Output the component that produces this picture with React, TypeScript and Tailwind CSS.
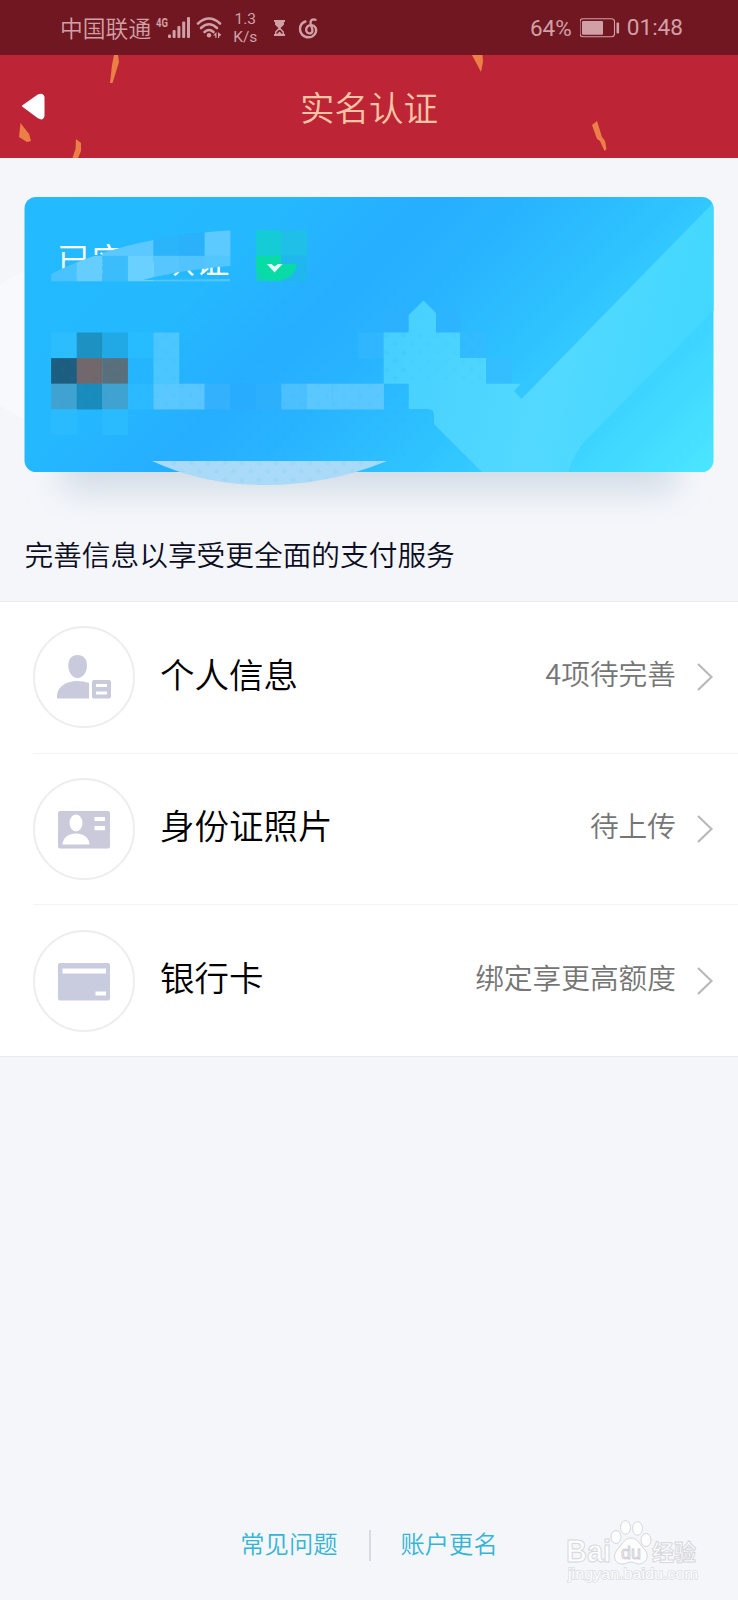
import React from 'react';

interface Row {
    label: string;
    hint: string;
    icon: React.ReactNode;
}

// [column, row, color]
type Cell = [number, number, string];

const CELL = 25.58;

const titleCells: Cell[] = [
    [4, 9, '#5bc8ff'],
    [5, 9, '#5bc8ff'],
    [6, 9, '#2cb4fb'],
    [7, 9, '#2ab1fa'],
    [8, 9, '#5cc9ff'],
    [2, 10, '#49c3ff'],
    [3, 10, '#66cdff'],
    [4, 10, '#3bbcfb'],
    [5, 10, '#69d0ff'],
    [6, 10, '#57c6ff'],
    [7, 10, '#51c3fd'],
    [8, 10, '#52c6ff'],
    [10, 9, '#15cbd5'],
    [11, 9, '#1fbfe8'],
    [10, 10, '#12d0bd'],
    [11, 10, '#20b7ef'],
];

const bodyCells: Cell[] = [
    [2, 13, '#2cbdff'],
    [3, 13, '#1d91c2'],
    [4, 13, '#21a9e6'],
    [5, 13, '#27bcff'],
    [6, 13, '#4cc6ff'],
    [2, 14, '#1c5d80'],
    [3, 14, '#72686b'],
    [4, 14, '#596f7c'],
    [5, 14, '#25b5fe'],
    [6, 14, '#4cc6ff'],
    [2, 15, '#3fa2d1'],
    [3, 15, '#198cbd'],
    [4, 15, '#3fa2d1'],
    [5, 15, '#2bb9ff'],
    [6, 15, '#5ac8ff'],
    [7, 15, '#59c6ff'],
    [8, 15, '#34b1fd'],
    [9, 15, '#28adfe'],
    [10, 15, '#2cb0fc'],
    [11, 15, '#4cc0ff'],
    [12, 15, '#5ac8ff'],
    [13, 15, '#5ac8ff'],
    [14, 15, '#5ac8ff'],
    [2, 16, '#2abbff'],
    [4, 16, '#2abbff'],
    [14, 13, '#30b6ff'],
    [15, 12, '#2bb1ff'],
    [17, 12, '#2db4ff'],
    [18, 13, '#33bbff'],
    [19, 14, '#34beff'],
];

const Mosaic = ({ cells }: { cells: Cell[] }) => (
    <>
        {cells.map(([col, row, color]) => (
            <rect
                key={`${col}-${row}`}
                x={col * CELL}
                y={row * CELL}
                width={CELL + 0.2}
                height={CELL + 0.2}
                fill={color}
            />
        ))}
    </>
);

const StatusBar = () => (
    <div className="h-[55px] bg-[#711721] text-[#d0a0a6] flex items-center pt-px pl-[60px] pr-[55px]">
        <span className="text-[22.8px] leading-none whitespace-nowrap font-[350]">中国联通</span>
        <svg className="ml-1 -mt-px shrink-0" width="68" height="26" viewBox="155 15 68 26" fill="currentColor">
            <text x="156" y="27" fontSize="13" fontWeight="bold" textLength="12" lengthAdjust="spacingAndGlyphs" fontFamily="Roboto, sans-serif">4G</text>
            <rect x="168" y="34.5" width="3" height="3.5" rx="1" />
            <rect x="172.6" y="30" width="3" height="8" rx="1" />
            <rect x="177.4" y="26" width="3" height="12" rx="1" />
            <rect x="182.2" y="21.5" width="3" height="16.5" rx="1" />
            <rect x="187" y="17" width="3" height="21" rx="1" />
            <g fill="none" stroke="currentColor" strokeWidth="2.6" strokeLinecap="round">
                <path d="M198 23.5Q209 13.5 220 23.5" />
                <path d="M201 28Q209 20.5 217 28" />
                <path d="M204.5 32Q209 28 213.5 32" />
            </g>
            <circle cx="209" cy="35.3" r="2.2" />
            <path d="M213 35.5L216.5 32V38H215.3V35.5ZM221.5 35L218 32V38H219.2V36.3Z" />
        </svg>
        <div className="ml-[10px] w-[24px] text-center font-[Roboto] text-[15.5px] leading-[18px]">
            <div>1.3</div>
            <div>K/s</div>
        </div>
        <svg className="ml-[16px] -mt-px shrink-0" width="46" height="24" viewBox="273 16 46 24" fill="none" stroke="currentColor">
            <path d="M274 21H285M274 35H285" strokeWidth="2" />
            <path d="M275.8 22V24.5L279.5 28L275.8 32V35M283.2 22V24.5L279.5 28L283.2 32V35" strokeWidth="1.5" />
            <path d="M276 22H283V24.5L279.5 28.5L276 24.5ZM276 35L279.5 31.5L283 35Z" fill="currentColor" stroke="none" />
            <path
                d="M315.5 19.8C312.5 18.6 310 20.5 310.6 23.3L312.4 29.8C312.9 32.6 310.8 33.7 309 33.3C306.3 32.7 305.5 30 306.6 27.7C308.5 24.2 313.7 24.2 315.6 27.8C317.5 32 314 37.3 308.6 37.3C303 37.3 299.7 33 300 28.7C300.2 25.3 302.2 22.6 305.4 21.5"
                strokeWidth="2.4"
                strokeLinecap="round"
            />
        </svg>
        <span className="ml-auto font-[Roboto] text-[22.5px] leading-none pt-px">64%</span>
        <svg className="ml-[8px] shrink-0" width="41" height="20" viewBox="579 18 41 20">
            <rect x="579" y="18.8" width="34.5" height="18" rx="3" fill="none" stroke="currentColor" strokeWidth="1.1" />
            <rect x="581" y="21" width="21" height="13.7" rx="1" fill="currentColor" />
            <rect x="615.5" y="22.5" width="2.6" height="11" rx="1" fill="currentColor" />
        </svg>
        <span className="ml-[6px] font-[Roboto] text-[22.6px] leading-none pt-px">01:48</span>
    </div>
);

const Header = () => (
    <header className="relative h-[103px] bg-[#bd2536] flex items-center justify-center">
        <svg className="absolute inset-0" width="738" height="103" viewBox="0 55 738 103">
            <g fill="#ec7f48">
                <path d="M114 55H118L119 62L112.5 83H110L112 65Z" />
                <path d="M20.5 123L29 134L31 141L27 142L19 137Z" />
                <path d="M76 139L81 143V151L78 158H72.5L75.5 149Z" />
                <path d="M472 55H482.5L483 62L481 72Z" />
                <path d="M597 121L592 125L597 139L600 141L604.5 151L606.5 149L605 141L602 137Z" />
            </g>
            <path
                d="M23 106L38 95.5Q43 93.5 43.5 97V116Q43 120 38.5 117.5Z"
                fill="#fff"
                stroke="#fff"
                strokeWidth="2"
                strokeLinejoin="round"
            />
        </svg>
        <h1 className="relative text-[34.5px] leading-none font-[350] text-[#fbc4a4]">实名认证</h1>
    </header>
);

const IdentityCard = () => (
    <section className="relative h-[342px]">
        <svg className="absolute inset-0" width="738" height="364" viewBox="0 158 738 364">
            <defs>
                <linearGradient id="cardFill" gradientUnits="userSpaceOnUse" x1="24" y1="197" x2="506" y2="679">
                    <stop offset="0" stopColor="#24baff" />
                    <stop offset="0.27" stopColor="#24b9ff" />
                    <stop offset="0.42" stopColor="#26aeff" />
                    <stop offset="0.52" stopColor="#28b3ff" />
                    <stop offset="0.68" stopColor="#2ec3ff" />
                    <stop offset="1" stopColor="#4be6ff" />
                </linearGradient>
                <linearGradient id="tickFill" gradientUnits="userSpaceOnUse" x1="400" y1="330" x2="700" y2="400">
                    <stop offset="0" stopColor="#47d0ff" />
                    <stop offset="0.5" stopColor="#53d9ff" />
                    <stop offset="1" stopColor="#40d7ff" />
                </linearGradient>
                <filter id="soft" x="-20%" y="-80%" width="140%" height="260%">
                    <feGaussianBlur stdDeviation="16" />
                </filter>
                <clipPath id="cardClip">
                    <rect x="24.5" y="197" width="689" height="275" rx="11.5" />
                </clipPath>
            </defs>
            <circle cx="50" cy="345" r="78" fill="#f8f9fd" />
            <rect x="62" y="430" width="614" height="62" fill="#d3dde7" filter="url(#soft)" />
            <g clipPath="url(#cardClip)">
                <rect x="24" y="197" width="690" height="276" fill="url(#cardFill)" />
                <Mosaic cells={bodyCells} />
                <path
                    d="M408.7 315L423.5 300.5L436 313V332.5H460V358H486V383.7H521L514 391L521.5 399L714 202V310L645 380L585 441Q574 453 568 473H483L434 424V415Q434 409 428 409H408.7V383.7H383.7V332.5H408.7Z"
                    fill="url(#tickFill)"
                />
            </g>
        </svg>
        <div className="relative pt-[83px] pl-[57px] flex items-center">
            <span className="text-[34.5px] leading-none text-white font-[350]">已实名认证</span>
        </div>
        <svg className="absolute inset-0" width="738" height="342" viewBox="0 158 738 342">
            <defs>
                <clipPath id="titleClip">
                    <path d="M51 281.5V274Q125 237 230 230.3L256 229H307V281.5H256V264L230 266Q180 270 143 280L230 279V281.5Z" />
                </clipPath>
                <pattern id="dots" width="17" height="17" patternUnits="userSpaceOnUse">
                    <path d="M4 1L7 4L4 7L1 4ZM12.5 9.5L15.5 12.5L12.5 15.5L9.5 12.5Z" fill="#0b9bf0" fillOpacity="0.05" />
                </pattern>
            </defs>
            <g clipPath="url(#titleClip)">
                <rect x="153" y="230" width="77" height="26" fill="#2ab3fb" />
                <Mosaic cells={titleCells} />
            </g>
            <path d="M256 256H281V264H297Q294 280.5 275 280.5Q260 280.5 256 268Z" fill="#08dba5" />
            <path d="M267 264H271.5L274.5 266.5L278 264H282.5L274.5 272.5Z" fill="#e4fff8" />
            <path d="M152 461H387Q328 485 265 485Q204 485 152 461Z" fill="#a9daf7" />
            <path d="M179 281.4H409V461H179Z" fill="url(#dots)" />
            <path d="M152 461H387Q328 485 265 485Q204 485 152 461Z" fill="url(#dots)" />
            <path d="M51 332.5H179V409H51ZM384 332.5H486V383.7H384Z" fill="url(#dots)" />
        </svg>
    </section>
);

const PersonIcon = () => (
    <svg width="54" height="44" viewBox="57 654 54 44" fill="#c9cadb">
        <path d="M77.5 654C83 654 87 658 87 664.5C87 671 83 677 77.5 677C72 677 68.3 671 68.3 664.5C68.3 658 72 654 77.5 654Z" />
        <path d="M57 697V694C58 685 67 680 77 680Q84 680 89 682V697.5H58Z" />
        <path fillRule="evenodd" d="M94 679H109Q111 679 111 681V695.5Q111 697.5 109 697.5H94Q92 697.5 92 695.5V681Q92 679 94 679ZM96 683V686H107V683ZM96 690.5V693.5H107V690.5Z" />
    </svg>
);

const IdIcon = () => (
    <svg className="mt-[3px]" width="52" height="38" viewBox="0 0 52 38">
        <rect width="52" height="37.5" rx="2" fill="#cacadb" />
        <ellipse cx="18" cy="12" rx="6.5" ry="8.5" fill="#fff" />
        <path d="M4.5 33.5C5 26 11 22.5 18 22.5S31 26 31.5 33.5Z" fill="#fff" />
        <path d="M36.5 6H47V10H36.5ZM36.5 15H47V19.3H36.5Z" fill="#fff" />
    </svg>
);

const BankIcon = () => (
    <svg className="mt-[3px]" width="52" height="38" viewBox="0 0 52 38">
        <rect width="52" height="37.5" rx="2" fill="#c9ccde" />
        <path d="M4.5 5.5H48V10.5H4.5ZM37.5 28.5H48V32.5H37.5Z" fill="#fff" />
    </svg>
);

const rows: Row[] = [
    { label: '个人信息', hint: '4项待完善', icon: <PersonIcon /> },
    { label: '身份证照片', hint: '待上传', icon: <IdIcon /> },
    { label: '银行卡', hint: '绑定享更高额度', icon: <BankIcon /> },
];

const InfoRow = ({ row }: { row: Row }) => (
    <li className="ml-[33px] h-[151.5px] pr-[24px] flex items-center border-b border-[#f3f3f5] last:h-[151px] last:border-b-0">
        <div className="size-[102px] rounded-full border-2 border-[#ededf0] flex items-center justify-center">
            {row.icon}
        </div>
        <span className="ml-[25px] -mt-[9px] text-[34.5px] leading-none font-[350] text-black">{row.label}</span>
        <span className="ml-auto -mt-[7px] text-[28.7px] leading-none font-[350] text-[#757575]">{row.hint}</span>
        <svg className="ml-[20px]" width="18" height="30" viewBox="0 0 18 30" fill="none" stroke="#b9b9b9" strokeWidth="2.2">
            <path d="M2 2L15.5 15L2 28" />
        </svg>
    </li>
);

const Watermark = () => (
    <svg className="absolute right-[38px] bottom-[10px] overflow-visible" width="140" height="75" viewBox="560 1515 140 75">
        <g fill="#fdfdfe" stroke="#d6d7dc" strokeWidth="1">
            <text x="566" y="1562" fontSize="31" fontWeight="bold" textLength="45" lengthAdjust="spacingAndGlyphs" fontFamily="Liberation Sans, sans-serif">Bai</text>
            <text x="652" y="1560" fontSize="22" fontWeight="bold" textLength="44" fontFamily="Noto Sans CJK SC, sans-serif">经验</text>
            <path d="M631 1538C638 1538 640 1545 645 1550C650 1556 646 1564 639 1564C635 1564 634 1562 631 1562S626 1564 622 1564C615 1564 612 1556 617 1550C622 1545 624 1538 631 1538Z" />
            <ellipse cx="616" cy="1537" rx="5" ry="6.5" />
            <ellipse cx="625.5" cy="1527.5" rx="5" ry="6.8" />
            <ellipse cx="637.5" cy="1528.5" rx="5" ry="6.8" />
            <ellipse cx="646" cy="1540" rx="5" ry="6.5" />
            <text x="621" y="1559" fontSize="18" textLength="20" lengthAdjust="spacingAndGlyphs" stroke="#cfd0d6" fontFamily="Liberation Sans, sans-serif">du</text>
        </g>
        <text x="568" y="1579" fontSize="14.5" textLength="130" lengthAdjust="spacingAndGlyphs" fill="#fdfdfe" stroke="#dcdde2" strokeWidth="1.4" paintOrder="stroke" fontFamily="Liberation Sans, sans-serif">jingyan.baidu.com</text>
    </svg>
);

const App: React.FC = () => {
    return (
        <div className="relative w-[738px] h-[1600px] overflow-hidden bg-[#f4f6fa] font-['Noto_Sans_CJK_SC',sans-serif] flex flex-col">
            <StatusBar />
            <Header />
            <IdentityCard />
            <h2 className="relative h-[101px] pt-[40px] pl-[24.5px] text-[28.7px] leading-none font-[350] text-[#0b0d22]">
                完善信息以享受更全面的支付服务
            </h2>
            <ul className="bg-white border-y border-[#e9eaec]">
                {rows.map(row => (
                    <InfoRow key={row.label} row={row} />
                ))}
            </ul>
            <footer className="mt-auto h-[76px] pt-[6px] flex items-start justify-center text-[24.3px] font-[350] text-[#35b5d6]">
                <a className="leading-[25px]">常见问题</a>
                <span className="ml-[31px] mr-[30px] w-[2px] h-[31px] bg-[#d8dadf]" />
                <a className="leading-[25px]">账户更名</a>
            </footer>
            <Watermark />
        </div>
    );
};

export default App;
